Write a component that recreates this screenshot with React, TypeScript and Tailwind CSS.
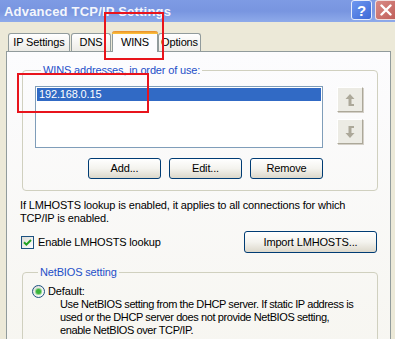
import React from "react";

function XpButton({ label, w, h = 21 }: { label: string; w: number; h?: number }) {
  return (
    <div
      className="flex items-center justify-center rounded-[3px] border border-[#003c74] bg-gradient-to-b from-[#ffffff] via-[#f4f3ee] to-[#dcd8cb] text-black whitespace-nowrap"
      style={{ width: w, height: h }}
    >
      {label}
    </div>
  );
}

function ArrowBtn({ down }: { down?: boolean }) {
  return (
    <div className="w-[26px] h-[25px] flex items-center justify-center bg-[#ecebe4] border border-t-white border-l-white border-b-[#aca899] border-r-[#aca899] shadow-[1px_1px_0_#d4d0c8]">
      <svg width="10" height="12" viewBox="0 0 10 12" style={down ? { transform: "scaleY(-1)" } : undefined}>
        <path d="M5 0 L9.5 5 L6.5 5 L6.5 10 L9 10 L9 12 L3.5 12 L3.5 5 L0.5 5 Z" fill="#aca899" />
      </svg>
    </div>
  );
}

export default function App() {
  return (
    <div className="relative w-[395px] h-[339px] overflow-hidden bg-[#ece9d8] flex flex-col font-['Liberation_Sans',Arial,sans-serif] text-[11px] leading-[13px] tracking-[-0.15px] text-black">
      {/* Title bar */}
      <div className="h-[22px] shrink-0 flex items-start bg-gradient-to-b from-[#7e9be4] via-[#7895e0] to-[#8eaaea]">
        <div className="pl-[4px] pt-[4px] text-[13px] leading-[15px] font-bold text-[#f4f6fc] tracking-[0.2px]">
          Advanced TCP/IP Settings
        </div>
        <div className="ml-auto flex gap-[3px]">
          <div className="w-[21px] h-[20px] rounded-[3px] border border-[#e6ecfb] bg-gradient-to-br from-[#6f98f0] to-[#3d68d6] flex items-center justify-center text-white font-bold text-[15px] leading-none">
            ?
          </div>
          <div className="w-[20px] h-[20px] rounded-l-[3px] border border-r-0 border-[#f0dede] bg-gradient-to-br from-[#d98a86] to-[#c0605a] flex items-center justify-center">
            <svg width="12" height="12" viewBox="0 0 12 12">
              <path d="M1.5 1.5 L10.5 10.5 M10.5 1.5 L1.5 10.5" stroke="white" strokeWidth="2.4" strokeLinecap="round" />
            </svg>
          </div>
        </div>
      </div>

      {/* Tabs */}
      <div className="mt-[9px] h-[20px] shrink-0 flex items-end relative z-10">
        <div className="ml-[8px] w-[62px] h-[18px] border border-b-0 border-[#919b9c] rounded-t-[3px] bg-gradient-to-b from-white to-[#ecebe6] flex items-center justify-center">
          IP Settings
        </div>
        <div className="ml-[1px] w-[40px] h-[18px] border border-b-0 border-[#919b9c] rounded-t-[3px] bg-gradient-to-b from-white to-[#ecebe6] flex items-center justify-center">
          DNS
        </div>
        <div className="ml-[1px] w-[46px] h-[21px] -mb-[1px] border-x border-[#919b9c] rounded-t-[3px] bg-[#fcfcfe] flex flex-col">
          <div className="h-[3px] rounded-t-[3px] bg-gradient-to-b from-[#e68b2c] to-[#ffc73c] -mx-[1px]" />
          <div className="flex-1 flex items-center justify-center pb-[2px]">WINS</div>
        </div>
        <div className="w-[43px] h-[18px] border border-b-0 border-[#919b9c] rounded-t-[3px] bg-gradient-to-b from-white to-[#ecebe6] flex items-center justify-center">
          Options
        </div>
      </div>

      {/* Panel */}
      <div className="ml-[6px] w-[385px] flex-1 border border-[#919b9c] bg-gradient-to-b from-[#fcfcfe] to-[#f7f6f1] flex flex-col">
        <fieldset className="ml-[15px] mt-[12px] w-[356px] border border-[#d0d0bf] rounded-[4px] pl-[12px] pt-[9px] pb-[11px]">
          <legend className="ml-[6px] px-[2px] text-[#1e4fc8]">WINS addresses, in order of use:</legend>
          <div className="flex">
            <div className="w-[288px] h-[62px] border border-[#7f9db9] bg-white p-[1px]">
              <div className="h-[13px] bg-[#316ac5] text-white pl-[2px]">192.168.0.15</div>
            </div>
            <div className="ml-[14px] mt-[1px] flex flex-col gap-[7px]">
              <ArrowBtn />
              <ArrowBtn down />
            </div>
          </div>
          <div className="mt-[10px] w-[288px] flex justify-end gap-[8px]">
            <XpButton label="Add..." w={73} />
            <XpButton label="Edit..." w={73} />
            <XpButton label="Remove" w={73} />
          </div>
        </fieldset>

        <p className="ml-[13px] mt-[8px] whitespace-nowrap">
          If LMHOSTS lookup is enabled, it applies to all connections for which
          <br />
          TCP/IP is enabled.
        </p>

        <div className="mt-[6px] ml-[14px] w-[356px] h-[22px] flex items-center">
          <div className="w-[13px] h-[13px] border border-[#1c5180] bg-gradient-to-br from-[#dcdcd7] to-white flex items-center justify-center">
            <svg width="9" height="9" viewBox="0 0 9 9">
              <path d="M1 4.2 L3.4 6.6 L8 2" stroke="#21a121" strokeWidth="2" fill="none" />
            </svg>
          </div>
          <span className="ml-[4px]">Enable LMHOSTS lookup</span>
          <div className="ml-auto">
            <XpButton label="Import LMHOSTS..." w={133} h={22} />
          </div>
        </div>

        <fieldset className="ml-[15px] mt-[13px] w-[356px] border border-[#d0d0bf] rounded-[4px] pl-[9px] pt-[6px] pb-[8px]">
          <legend className="ml-[6px] px-[2px] text-[#1e4fc8]">NetBIOS setting</legend>
          <div className="flex items-center h-[13px]">
            <div className="w-[13px] h-[13px] rounded-full border border-[#1c5180] bg-gradient-to-br from-[#dcdcd7] to-white flex items-center justify-center">
              <div className="w-[5px] h-[5px] rounded-full bg-[#3bb43b] shadow-[0_0_0_1px_#8fd48f]" />
            </div>
            <span className="ml-[3px]">Default:</span>
          </div>
          <p className="ml-[28px] whitespace-nowrap tracking-[-0.4px]">
            Use NetBIOS setting from the DHCP server. If static IP address is
            <br />
            used or the DHCP server does not provide NetBIOS setting,
            <br />
            enable NetBIOS over TCP/IP.
          </p>
        </fieldset>
      </div>

      {/* Red annotation boxes */}
      <div className="absolute left-[104px] top-[12px] w-[60px] h-[48px] border-2 border-[#e8141c] z-20" />
      <div className="absolute left-[17px] top-[73px] w-[132px] h-[40px] border-2 border-[#e8141c] z-20" />
    </div>
  );
}
